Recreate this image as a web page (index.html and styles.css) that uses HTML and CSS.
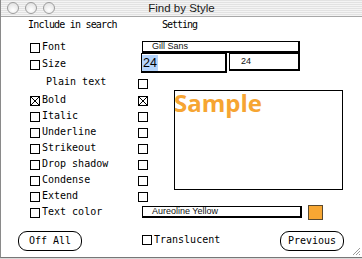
FILE: index.html
```html
<!DOCTYPE html>
<html>
<head>
    <title>Find by Style</title>
    <link rel="stylesheet" href="styles.css">
</head>
<body>
    <div class="window">
        <div class="titlebar">
            <div class="lights"><span></span><span></span><span></span></div>
            <div class="title">Find by Style</div>
        </div>

        <div class="panel">
            <div class="hd-include">Include in search</div>
            <div class="hd-setting">Setting</div>

            <div class="opt row-font"><span class="cb"></span>Font</div>
            <div class="field wide row-font">Gill Sans</div>

            <div class="opt row-size"><span class="cb"></span>Size</div>
            <div class="size-fields row-size">
                <div class="field big"><span class="sel">24</span></div>
                <div class="field small">24</div>
            </div>

            <div class="plain row-plain">Plain text</div>
            <span class="cb rcb row-plain"></span>

            <div class="opt row-bold"><span class="cb checked"><svg width="8" height="8"><path d="M0 0L8 8M8 0L0 8" stroke="#000" stroke-width="1"/></svg></span>Bold</div>
            <span class="cb rcb checked row-bold"><svg width="8" height="8"><path d="M0 0L8 8M8 0L0 8" stroke="#000" stroke-width="1"/></svg></span>

            <div class="opt row-italic"><span class="cb"></span>Italic</div>
            <span class="cb rcb row-italic"></span>

            <div class="opt row-under"><span class="cb"></span>Underline</div>
            <span class="cb rcb row-under"></span>

            <div class="opt row-strike"><span class="cb"></span>Strikeout</div>
            <span class="cb rcb row-strike"></span>

            <div class="opt row-drop"><span class="cb"></span>Drop shadow</div>
            <span class="cb rcb row-drop"></span>

            <div class="opt row-cond"><span class="cb"></span>Condense</div>
            <span class="cb rcb row-cond"></span>

            <div class="opt row-ext"><span class="cb"></span>Extend</div>
            <span class="cb rcb row-ext"></span>

            <div class="sample">Sample</div>

            <div class="opt row-color"><span class="cb"></span>Text color</div>
            <div class="color-set row-color">
                <div class="field color-name">Aureoline Yellow</div>
                <span class="swatch"></span>
            </div>

            <div class="buttons">
                <button class="pill">Off All</button>
                <div class="translucent"><span class="cb"></span>Translucent</div>
                <button class="pill prev">Previous</button>
            </div>
        </div>

        <svg class="grip" width="9" height="9"><path d="M8 1L1 8M8 4L4 8M8 7L7 8" stroke="#9a9a9a" stroke-width="1"/></svg>
    </div>
</body>
</html>
```

FILE: styles.css
```css
html, body { margin: 0; }
body { background: #d9d9d9; font-family: "DejaVu Sans Mono", monospace; font-size: 10px; color: #000; }

.window { position: relative; width: 361px; height: 257px; background: #fff; border-left: 1px solid #8a8a8a; border-bottom: 1px solid #777; }

.titlebar { height: 16px; border-bottom: 1px solid #a8a8a8; display: grid; grid-template-columns: 1fr auto 1fr; align-items: center;
    background: repeating-linear-gradient(to bottom, #e2e2e2 0 1px, #f4f4f4 1px 2px); }
.lights { display: flex; gap: 6px; margin-left: 6px; }
.lights span { width: 10px; height: 10px; border: 1px solid #9c9c9c; border-radius: 50%; background: radial-gradient(circle at 50% 70%, #fff, #dcdcdc); }
.title { font-family: "Liberation Sans", Arial, sans-serif; font-size: 11.5px; line-height: 16px; color: #1a1a1a; }

.panel { display: grid; grid-template-columns: 29px 108px 36px 169px; grid-template-rows: 14px 21px 20px 19px repeat(8, 16px) 31px; padding-top: 1px; }

.hd-include { grid-row: 1; grid-column: 2; margin-left: -2px; letter-spacing: -0.8px; line-height: 14px; white-space: nowrap; }
.hd-setting { grid-row: 1; grid-column: 3 / 5; margin-left: 24px; letter-spacing: -1px; line-height: 14px; }

.cb { display: inline-block; width: 8px; height: 8px; border: 1px solid #000; background: #fff; flex: none; }
.cb svg { display: block; }

.opt { grid-column: 2; display: flex; align-items: flex-start; height: 16px; line-height: 16px; white-space: nowrap; }
.opt .cb { margin-top: 4px; margin-right: 2px; }
.rcb { grid-column: 3; align-self: start; margin-top: 4px; }

.row-font { grid-row: 2; }
.row-size { grid-row: 3; }
.row-plain { grid-row: 4; }
.row-bold { grid-row: 5; }
.row-italic { grid-row: 6; }
.row-under { grid-row: 7; }
.row-strike { grid-row: 8; }
.row-drop { grid-row: 9; }
.row-cond { grid-row: 10; }
.row-ext { grid-row: 11; }
.row-color { grid-row: 12; }

.opt.row-font { margin-top: 7px; }
.opt.row-size { margin-top: 3px; }

.plain { grid-column: 2; margin-left: 16px; margin-top: 1px; line-height: 16px; }
.rcb.row-plain { margin-top: 6px; }

.field { box-sizing: border-box; background: #fff; border-top: 1px solid #000; border-left: 1px solid #000; border-right: 2px solid #000; border-bottom: 2px solid #000;
    font-family: "Liberation Sans", Arial, sans-serif; font-size: 9px; color: #111; white-space: nowrap; }
.field.wide { grid-column: 3 / 5; align-self: end; margin-left: 4px; width: 158px; height: 12px; line-height: 9px; padding-left: 9px; }

.size-fields { grid-column: 3 / 5; display: flex; gap: 2px; margin-left: 3px; align-items: flex-start; }
.field.big { width: 86px; height: 20px; padding-top: 1px; }
.sel { display: inline-block; background: #b4d4fc; font-size: 12.5px; line-height: 16px; padding: 0 1px 0 1px; color: #000; }
.field.small { width: 71px; height: 18px; line-height: 15px; padding-left: 11px; }

.sample { grid-column: 4; grid-row: 5 / 13; align-self: start; margin-top: -2px; height: 100px; box-sizing: border-box; border: 1px solid #000;
    font-family: "Open Sans", sans-serif; font-weight: bold; font-size: 24px; line-height: 24px; color: #f6a532; text-indent: -1px; }

.color-set { grid-column: 3 / 5; display: flex; align-items: center; margin-left: 4px; }
.field.color-name { width: 160px; height: 12px; line-height: 9px; padding-left: 9px; }
.swatch { width: 13px; height: 13px; margin-left: 6px; background: #f7a733; border: 1px solid #5a4a30; }

.buttons { grid-row: 13; grid-column: 1 / -1; display: flex; align-items: flex-end; }
.pill { width: 64px; height: 20px; margin: 0; padding: 0; border: 1.5px solid #000; border-radius: 9px; background: #fff;
    font-family: "DejaVu Sans Mono", monospace; font-size: 10px; color: #000; line-height: 16px; }
.pill:first-child { margin-left: 17px; }
.translucent { margin-left: 60px; margin-bottom: 3px; display: flex; align-items: flex-start; line-height: 16px; }
.translucent .cb { margin-top: 3px; margin-right: 2px; }
.pill.prev { margin-left: auto; margin-right: -1px; }

.grip { position: absolute; right: 1px; bottom: 1px; }
```
